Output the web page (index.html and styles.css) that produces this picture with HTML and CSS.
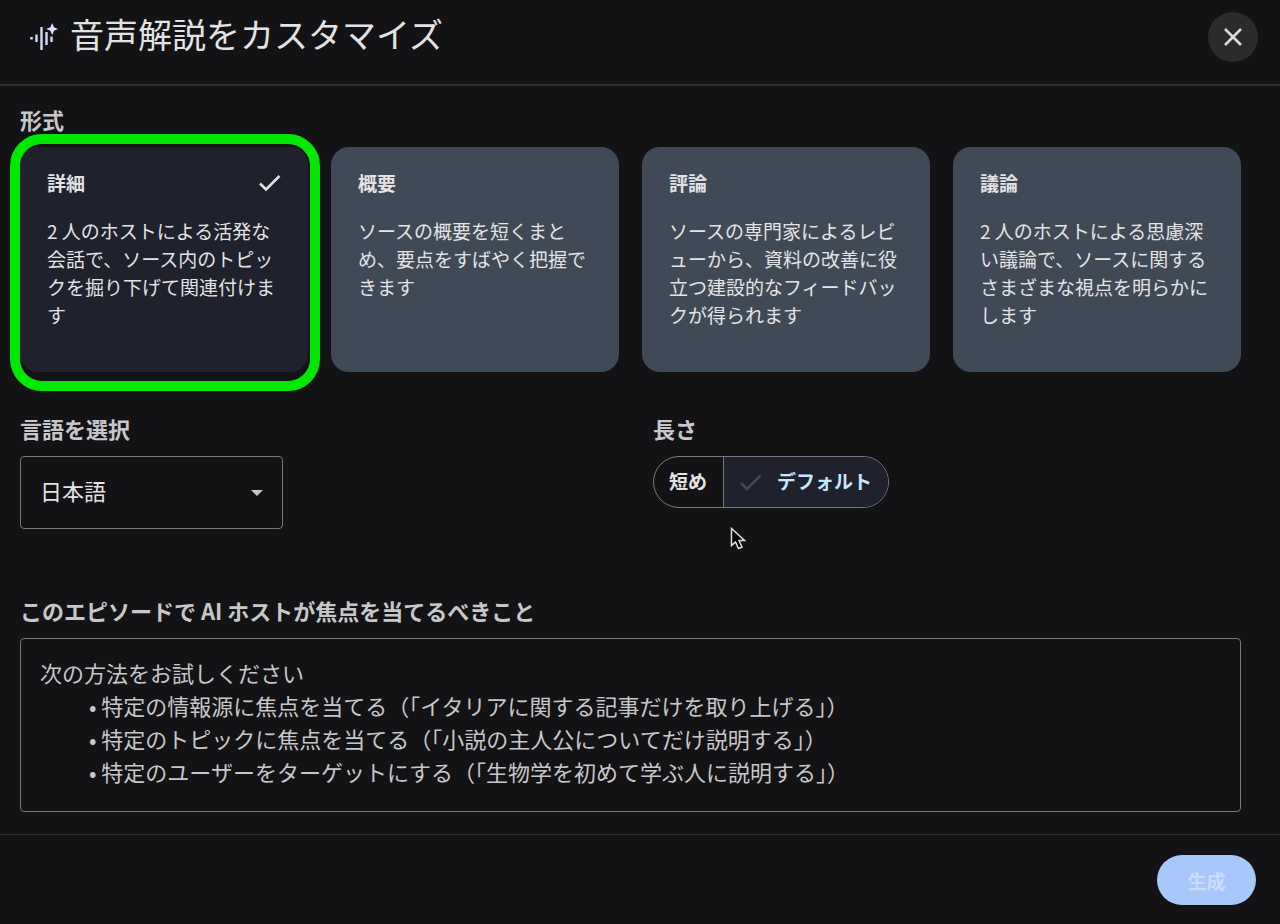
FILE: index.html
```
<!DOCTYPE html>
<html lang="ja">
<head>
    <meta charset="UTF-8">
    <meta name="viewport" content="width=device-width, initial-scale=1.0">
    <title>音声解説をカスタマイズ</title>
    <link rel="stylesheet" href="styles.css">
</head>
<body>
    <form class="dialog">
        <header class="dialog-header">
            <svg class="logo" viewBox="0 0 30 30" aria-hidden="true">
                <g fill="none" stroke="#d0d7f5" stroke-width="2.4">
                    <path d="M2.200 16.200h2.600M8.500 12.500v7.500M13.500 5v23M18.500 10v13M23.500 14.500v5.500"/>
                </g>
                <path fill="#d9e0ff" d="M24.200 1l1.800 4.200 4 1.800-4 1.800-1.800 4.200-1.800-4.200-4.200-1.800 4.200-1.800z"/>
            </svg>
            <h1>音声解説をカスタマイズ</h1>
            <button type="button" class="close-btn" aria-label="閉じる">
                <svg viewBox="0 0 24 24" aria-hidden="true">
                    <path d="M4 4l16 16M20 4L4 20"/>
                </svg>
            </button>
        </header>

        <main class="dialog-body">
            <fieldset class="formats">
                <legend class="label">形式</legend>
                <div class="cards">
                    <label class="card">
                        <input type="radio" name="format" value="deep" checked>
                        <span class="card-title">詳細
                            <svg class="check" viewBox="0 0 24 24" aria-hidden="true"><path d="M3 12.500l6 6L22.500 5"/></svg>
                        </span>
                        <span class="card-text">2 人のホストによる活発な会話で、ソース内のトピックを掘り下げて関連付けます</span>
                        <span class="highlight"></span>
                    </label>
                    <label class="card">
                        <input type="radio" name="format" value="brief">
                        <span class="card-title">概要</span>
                        <span class="card-text">ソースの概要を短くまとめ、要点をすばやく把握できます</span>
                    </label>
                    <label class="card">
                        <input type="radio" name="format" value="critique">
                        <span class="card-title">評論</span>
                        <span class="card-text">ソースの専門家によるレビューから、資料の改善に役立つ建設的なフィードバックが得られます</span>
                    </label>
                    <label class="card">
                        <input type="radio" name="format" value="debate">
                        <span class="card-title">議論</span>
                        <span class="card-text">2 人のホストによる思慮深い議論で、ソースに関するさまざまな視点を明らかにします</span>
                    </label>
                </div>
            </fieldset>

            <div class="options">
                <div class="field">
                    <label class="label" for="language">言語を選択</label>
                    <div class="select-box">
                        <select id="language" name="language">
                            <option>日本語</option>
                        </select>
                        <svg class="arrow" viewBox="0 0 12 6" aria-hidden="true"><path d="M0 0h12L6 6z"/></svg>
                    </div>
                </div>
                <fieldset class="field">
                    <legend class="label">長さ</legend>
                    <div class="toggle">
                        <label class="toggle-item">
                            <input type="radio" name="length" value="short">
                            <span class="toggle-text">短め</span>
                        </label>
                        <label class="toggle-item">
                            <input type="radio" name="length" value="default" checked>
                            <svg class="check" viewBox="0 0 24 24" aria-hidden="true"><path d="M2 13l6 6L21.500 5.500"/></svg>
                            <span class="toggle-text">デフォルト</span>
                        </label>
                        <svg class="cursor" viewBox="0 0 16 24" aria-hidden="true">
                            <path d="M1.500 1.500v17l4-3.500 3 6.500 3.500-1.500-3-6.500h5.500z"/>
                        </svg>
                    </div>
                </fieldset>
            </div>

            <div class="focus">
                <label class="label" for="focus">このエピソードで AI ホストが焦点を当てるべきこと</label>
                <textarea id="focus" name="focus" placeholder="次の方法をお試しください&#10;　　 • 特定の情報源に焦点を当てる（「イタリアに関する記事だけを取り上げる」）&#10;　　 • 特定のトピックに焦点を当てる（「小説の主人公についてだけ説明する」）&#10;　　 • 特定のユーザーをターゲットにする（「生物学を初めて学ぶ人に説明する」）"></textarea>
            </div>
        </main>

        <footer class="dialog-footer">
            <button type="submit" class="generate-btn">生成</button>
        </footer>
    </form>
</body>
</html>
```
FILE: styles.css
```
:root {
    --background: #131315;
    --line: #2d2d30;
    --outline: #77777a;
    --card: #404a57;
    --selected: #1f212c;
    --text: #e3e3e6;
    --text-muted: #c7c7ca;
    --primary: #a8c7fa;
    --highlight: #00e800;
}
* {
    box-sizing: border-box;
}
body {
    margin: 0;
    background-color: var(--background);
    color: var(--text);
    font-family: "Noto Sans CJK JP", sans-serif;
}
button, select, textarea {
    font-family: inherit;
}
fieldset {
    margin: 0;
    padding: 0;
    border: none;
    min-width: 0;
}
.dialog {
    display: flex;
    flex-direction: column;
    min-height: 100vh;
}
.dialog-header {
    display: flex;
    align-items: center;
    padding: 12px 22px 22px 28px;
    border-bottom: 2px solid var(--line);
}
.logo {
    width: 30px;
    height: 30px;
}
h1 {
    flex: 1;
    margin: 0 0 0 12px;
    padding-bottom: 6px;
    font-size: 34px;
    line-height: 42px;
    font-weight: 400;
}
.close-btn {
    display: flex;
    align-items: center;
    justify-content: center;
    width: 50px;
    height: 50px;
    padding: 0;
    border: none;
    border-radius: 50%;
    background-color: #2b2b2d;
    cursor: pointer;
}
.close-btn svg {
    width: 24px;
    height: 24px;
    fill: none;
    stroke: #dcdcdf;
    stroke-width: 2.5;
}
.dialog-body {
    flex: 1;
    padding: 19px 39px 22px 20px;
}
.label {
    display: block;
    padding: 0;
    margin-bottom: 14px;
    color: var(--text-muted);
    font-size: 22px;
    line-height: 28px;
    font-weight: 700;
}
.cards {
    display: grid;
    grid-template-columns: repeat(4, 1fr);
    gap: 23px;
}
.card {
    position: relative;
    min-height: 225px;
    padding: 22px 27px;
    border-radius: 18px;
    background-color: var(--card);
    cursor: pointer;
}
.card:has(input:checked) {
    background-color: var(--selected);
}
.card input, .toggle-item input {
    position: absolute;
    opacity: 0;
    margin: 0;
}
.card-title {
    display: flex;
    align-items: center;
    justify-content: space-between;
    margin-bottom: 20px;
    font-size: 19px;
    line-height: 28px;
    font-weight: 700;
}
.card-text {
    display: block;
    font-size: 19px;
    line-height: 28px;
}
.check {
    width: 24px;
    height: 24px;
    fill: none;
    stroke: currentColor;
    stroke-width: 2.5;
}
.highlight {
    position: absolute;
    inset: -13px -12px -19px -10px;
    border: 10px solid var(--highlight);
    border-radius: 32px;
    pointer-events: none;
}
.options {
    display: grid;
    grid-template-columns: 1fr 1fr;
    gap: 45px;
    margin: 42px 0 67px;
}
.select-box {
    position: relative;
    width: 263px;
}
select {
    width: 100%;
    height: 73px;
    padding: 0 19px 6px;
    border: 1px solid var(--outline);
    border-radius: 4px;
    appearance: none;
    background-color: transparent;
    color: var(--text);
    font-size: 22px;
}
.arrow {
    position: absolute;
    top: 34px;
    right: 20px;
    width: 12px;
    height: 6px;
    fill: var(--text-muted);
    pointer-events: none;
}
.toggle {
    position: relative;
    display: inline-flex;
    height: 52px;
    border: 1px solid var(--outline);
    border-radius: 26px;
}
.toggle-item {
    display: flex;
    align-items: center;
    gap: 14px;
    padding: 0 16px 0 15px;
    font-size: 19px;
    font-weight: 700;
    cursor: pointer;
}
.toggle-item + .toggle-item {
    border-left: 1px solid var(--outline);
    border-radius: 0 25px 25px 0;
}
.toggle-item:has(input:checked) {
    background-color: var(--selected);
    color: #c2e7ff;
}
.toggle-text {
    padding-bottom: 4px;
}
.toggle-item .check {
    color: #48494e;
}
.cursor {
    position: absolute;
    left: 76px;
    top: 70px;
    width: 16px;
    height: 24px;
    fill: #000000;
    stroke: #dddddd;
    stroke-width: 1.5;
    pointer-events: none;
}
textarea {
    display: block;
    width: 100%;
    height: 174px;
    padding: 17px 19px;
    border: 1px solid var(--outline);
    border-radius: 4px;
    resize: none;
    background-color: transparent;
    color: var(--text);
    font-size: 22px;
    line-height: 33px;
}
textarea::placeholder {
    color: var(--text-muted);
}
.dialog-footer {
    display: flex;
    justify-content: flex-end;
    padding: 20px 24px;
    border-top: 1px solid var(--line);
}
.generate-btn {
    width: 99px;
    height: 50px;
    border: none;
    border-radius: 25px;
    background-color: var(--primary);
    color: #c9dcfb;
    font-size: 19px;
    font-weight: 700;
    cursor: pointer;
}
```
